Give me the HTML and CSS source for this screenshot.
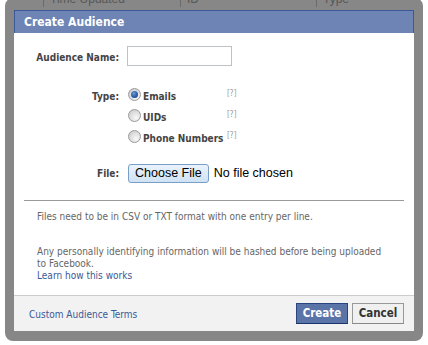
FILE: index.html
```html
<!DOCTYPE html>
<html>
<head>
<meta charset="utf-8">
<title>Create Audience</title>
<link rel="stylesheet" href="styles.css">
</head>
<body>
<div class="page">
  <div class="table-head">
    <div class="th th-check"></div>
    <div class="th">Time Updated</div>
    <div class="th">ID</div>
    <div class="th">Type</div>
  </div>
</div>

<div class="overlay">
  <div class="dialog">
    <div class="dialog-title">Create Audience</div>
    <div class="dialog-body">
      <div class="form">
        <div class="row row-name">
          <label class="label" for="aud-name">Audience Name:</label>
          <div class="control"><input id="aud-name" class="text-input" type="text"></div>
        </div>
        <div class="row row-type">
          <div class="label label-type">Type:</div>
          <div class="options">
            <div class="option">
              <span class="radio checked"></span>
              <span class="option-label">Emails</span>
              <span class="help">[?]</span>
            </div>
            <div class="option">
              <span class="radio"></span>
              <span class="option-label">UIDs</span>
              <span class="help">[?]</span>
            </div>
            <div class="option">
              <span class="radio"></span>
              <span class="option-label">Phone Numbers</span>
              <span class="help">[?]</span>
            </div>
          </div>
        </div>
        <div class="row row-file">
          <div class="label">File:</div>
          <div class="control file-control">
            <span class="file-button">Choose File</span>
            <span class="file-status">No file chosen</span>
          </div>
        </div>
      </div>
      <div class="separator"></div>
      <div class="info">
        <p class="info-line">Files need to be in CSV or TXT format with one entry per line.</p>
        <p class="info-block">Any personally identifying information will be hashed before being uploaded<br>to Facebook.<br><a class="link" href="#">Learn how this works</a></p>
      </div>
    </div>
    <div class="dialog-footer">
      <a class="link terms" href="#">Custom Audience Terms</a>
      <div class="buttons">
        <span class="btn btn-primary">Create</span>
        <span class="btn btn-cancel">Cancel</span>
      </div>
    </div>
  </div>
</div>
</body>
</html>
```

FILE: styles.css
```css
html, body {
  margin: 0;
  padding: 0;
  width: 428px;
  height: 345px;
  overflow: hidden;
  background: #ffffff;
}

body {
  position: relative;
  font-family: "DejaVu Sans Condensed", "DejaVu Sans", sans-serif;
  font-stretch: condensed;
  font-size: 10px;
  color: #333333;
}

/* backdrop table header, mostly covered by the dialog frame */
.page {
  height: 20px;
}

.table-head {
  display: grid;
  grid-template-columns: 43px 137px 136px 1fr;
  margin-top: -9px;
  height: 16px;
  font-family: "Liberation Sans", Arial, sans-serif;
  font-stretch: normal;
  font-size: 12px;
  line-height: 16px;
  color: #a8a8a8;
}

.th {
  border-left: 1px solid #c8c8c8;
  padding-left: 6px;
  white-space: nowrap;
}

.th-check {
  border-left: none;
}

/* modal frame */
.overlay {
  position: absolute;
  left: 5px;
  top: -2px;
  width: 418px;
  height: 343px;
  box-sizing: border-box;
  padding: 12px 9px 10px 9px;
  border-radius: 8px;
  background: rgba(0, 0, 0, 0.47);
}

.dialog {
  width: 400px;
  height: 321px;
  background: #ffffff;
  display: flex;
  flex-direction: column;
}

.dialog-title {
  height: 23px;
  box-sizing: border-box;
  background: #6d84b4;
  border: 1px solid #3b5998;
  border-bottom: none;
  color: #ffffff;
  font-weight: bold;
  font-size: 12px;
  line-height: 22px;
  padding-left: 9px;
}

.dialog-body {
  flex: 1;
  display: flex;
  flex-direction: column;
}

.form {
  display: flex;
  flex-direction: column;
  padding-top: 13px;
}

.row {
  display: grid;
  grid-template-columns: 105px 1fr;
  column-gap: 8px;
  align-items: center;
}

.label {
  text-align: right;
  font-weight: bold;
  color: #444444;
  white-space: nowrap;
}

.row-name .label {
  padding-top: 3px;
}

.text-input {
  display: block;
  width: 105px;
  height: 20px;
  box-sizing: border-box;
  margin: 0;
  border: 1px solid #bdc1c8;
  background: #ffffff;
  padding: 0 3px;
  outline: none;
}

.row-type {
  margin-top: 20px;
  align-items: start;
}

.label-type {
  line-height: 21px;
}

.options {
  display: flex;
  flex-direction: column;
}

.option {
  display: flex;
  align-items: center;
  height: 21px;
}

.radio {
  position: relative;
  width: 13px;
  height: 13px;
  box-sizing: border-box;
  margin-left: 1px;
  margin-top: -4px;
  border-radius: 50%;
  border: 1px solid #9a9a9a;
  background: radial-gradient(circle at 65% 70%, #f8f8f8 0%, #e2e2e2 45%, #c4c4c4 100%);
}

.radio.checked::after {
  content: "";
  position: absolute;
  left: 2px;
  top: 2px;
  width: 7px;
  height: 7px;
  border-radius: 50%;
  background: radial-gradient(circle at 40% 35%, #6f9ad6 0%, #2a5aa8 55%, #123a7a 100%);
}

.option-label {
  width: 84px;
  margin-left: 2px;
  font-weight: bold;
  color: #444444;
  white-space: nowrap;
}

.help {
  font-size: 8px;
  color: #9a9a9a;
  margin-top: -6px;
}

.row-file {
  margin-top: 14px;
  height: 20px;
}

.file-control {
  display: flex;
  align-items: center;
  font-family: "Liberation Sans", Arial, sans-serif;
  font-stretch: normal;
  font-size: 12.5px;
  color: #000000;
}

.file-button {
  margin-left: 1px;
  height: 19px;
  box-sizing: border-box;
  padding: 0 6px;
  line-height: 17px;
  border: 1px solid #7b9ec6;
  border-radius: 3px;
  background: linear-gradient(#eaf3fc, #cfe2f4);
  white-space: nowrap;
}

.file-status {
  margin-left: 5px;
  white-space: nowrap;
}

.separator {
  margin: 17px 10px 0 10px;
  height: 1px;
  background: #999999;
}

.info {
  padding: 10px 10px 0 23px;
  color: #666666;
  line-height: 12px;
}

.info p {
  margin: 0;
  white-space: nowrap;
}

.info-block {
  margin-top: 23px !important;
}

.link {
  color: #3b5998;
  text-decoration: none;
}

.dialog-footer {
  height: 36px;
  box-sizing: border-box;
  border-top: 1px solid #cccccc;
  background: #f2f2f2;
  display: flex;
  align-items: center;
  justify-content: space-between;
  padding: 0 10px 0 15px;
}

.terms {
  margin-top: 1px;
}

.buttons {
  display: flex;
  gap: 4px;
}

.btn {
  height: 21px;
  box-sizing: border-box;
  line-height: 19px;
  font-weight: bold;
  font-size: 11.5px;
  text-align: center;
  border: 1px solid;
}

.btn-primary {
  width: 52px;
  background: #5b74a8;
  border-color: #29447e #29447e #1a356e;
  color: #ffffff;
}

.btn-cancel {
  width: 52px;
  background: #f0f0f0;
  border-color: #999999 #999999 #888888;
  color: #333333;
}
```
